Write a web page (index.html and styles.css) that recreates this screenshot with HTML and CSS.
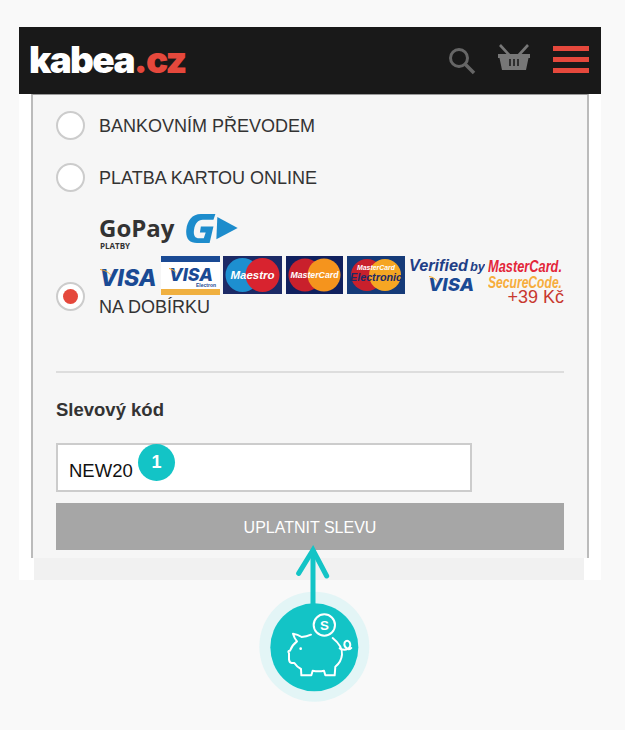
FILE: index.html
```html
<!DOCTYPE html>
<html lang="cs">

<head>
  <meta charset="utf-8">
  <meta name="viewport" content="width=device-width,initial-scale=1">
  <title>kabea.cz</title>
  <link rel="stylesheet" href="styles.css">
</head>

<body>
  <div class="shot">
    <header class="top">
      <div class="logo">kabea<span class="logo-cz">.cz</span></div>
      <div class="top-icons">
        <svg class="ico-search" width="30" height="30" viewBox="0 0 30 30">
          <circle cx="12" cy="12" r="8.5" fill="none" stroke="#666" stroke-width="3"/>
          <path d="M18 18l9 9" stroke="#666" stroke-width="3.5" fill="none"/>
        </svg>
        <svg class="ico-basket" width="32" height="27" viewBox="0 0 32 27">
          <path d="M2 1l11 12M30 1L19 13" stroke="#777" stroke-width="2.6" fill="none"/>
          <path d="M0 10h32v4h-1.500L28 26H4L1.500 14H0z" fill="#777"/>
          <path d="M12 15v7M16 15v7M20 15v7" stroke="#191919" stroke-width="1.500"/>
        </svg>
        <svg class="ico-menu" width="36" height="27" viewBox="0 0 36 27">
          <path d="M0 0h36v5H0zM0 11h36v5H0zM0 22h36v5H0z" fill="#e5483c"/>
        </svg>
      </div>
    </header>

    <main class="panel">
      <div class="pay-row">
        <span class="radio"></span>
        <span class="pay-label">BANKOVNÍM PŘEVODEM</span>
      </div>
      <div class="pay-row">
        <span class="radio"></span>
        <span class="pay-label">PLATBA KARTOU ONLINE</span>
      </div>
      <div class="pay-row pay-row-last">
        <span class="radio radio-on"></span>
        <div class="pay-body">
          <div class="gopay">
            <div class="gopay-name">GoPay<small>PLATBY</small></div>
            <svg class="gopay-mark" width="52" height="31" viewBox="0 0 53 32">
              <path d="M30 1H15C6 1 1 8 0 17c-1 9 3 14 11 14h13l4-17H15l-1 6h6l-2 6h-5c-4 0-6-3-5-9 1-6 4-10 9-10h11z" fill="#1d8ccc"/>
              <path d="M32 4l21 11.500L31 27z" fill="#1d8ccc"/>
            </svg>
          </div>
          <div class="cards">
            <svg width="59" height="39" viewBox="0 0 59 39">
              <text x="29" y="30" text-anchor="middle" class="t-visa" font-size="23" textLength="57" lengthAdjust="spacingAndGlyphs">VISA</text>
              <path d="M1 13q9 1 12 8q-4-6-12-7z" fill="#f0a72e"/>
            </svg>
            <svg width="59" height="39" viewBox="0 0 59 39">
              <rect width="59" height="39" fill="#fff"/>
              <rect width="59" height="6" fill="#1a4a94"/>
              <rect y="33" width="59" height="6" fill="#f0b040"/>
              <text x="30" y="25" text-anchor="middle" class="t-visa" font-size="18" textLength="44" lengthAdjust="spacingAndGlyphs">VISA</text>
              <path d="M8 12q6 1 8 6q-3-4-8-5z" fill="#f0a72e"/>
              <text x="45" y="31" text-anchor="middle" class="t-small" font-size="5" fill="#1a4a94">Electron</text>
            </svg>
            <svg width="60" height="38" viewBox="0 0 60 38">
              <rect x="0" width="59" height="38" fill="#1c2a66"/>
              <circle cx="19.500" cy="19" r="17" fill="#1d8fd0"/>
              <circle cx="39.500" cy="19" r="17" fill="#d8232f"/>
              <text x="29.500" y="23" text-anchor="middle" class="t-card" font-size="11" textLength="44" lengthAdjust="spacingAndGlyphs">Maestro</text>
            </svg>
            <svg width="58" height="38" viewBox="0 0 58 38">
              <rect width="57" height="38" fill="#10205e"/>
              <circle cx="19" cy="19" r="16.500" fill="#c9202c"/>
              <circle cx="38" cy="19" r="16.500" fill="#f5941d"/>
              <text x="28.500" y="22" text-anchor="middle" class="t-card" font-size="9" textLength="48" lengthAdjust="spacingAndGlyphs">MasterCard</text>
            </svg>
            <svg width="58" height="38" viewBox="0 0 58 38">
              <rect width="58" height="38" fill="#153a78"/>
              <circle cx="20" cy="19" r="16" fill="#c9202c"/>
              <circle cx="38" cy="19" r="16" fill="#f5a623"/>
              <text x="29" y="14" text-anchor="middle" class="t-card" font-size="7" textLength="38" lengthAdjust="spacingAndGlyphs">MasterCard</text>
              <text x="29" y="25" text-anchor="middle" class="t-elec" font-size="10" textLength="52" lengthAdjust="spacingAndGlyphs">Electronic</text>
            </svg>
            <svg width="77" height="39" viewBox="0 0 77 39">
              <text x="1" y="15" class="t-verified" font-size="17" textLength="59" lengthAdjust="spacingAndGlyphs">Verified</text>
              <text x="62" y="15" class="t-verified" font-size="12" textLength="15" lengthAdjust="spacingAndGlyphs">by</text>
              <text x="43" y="35" text-anchor="middle" class="t-visa" font-size="18" textLength="46" lengthAdjust="spacingAndGlyphs">VISA</text>
              <path d="M21 20q7 1 9 7q-3-5-9-6z" fill="#f0a72e"/>
            </svg>
            <svg width="76" height="39" viewBox="0 0 76 39">
              <text transform="scale(1 1.300)" x="0" y="12.500" class="t-secure" font-size="12.500" fill="#e3263a" textLength="74" lengthAdjust="spacingAndGlyphs">MasterCard.</text>
              <text transform="scale(1 1.300)" x="0" y="25" class="t-secure" font-size="12.500" fill="#f6ad3c" textLength="74" lengthAdjust="spacingAndGlyphs">SecureCode.</text>
            </svg>
          </div>
          <div class="pay-foot">
            <span class="pay-label">NA DOBÍRKU</span>
            <span class="surcharge">+39 Kč</span>
          </div>
        </div>
      </div>

      <hr class="divider">

      <h2 class="code-title">Slevový kód</h2>
      <div class="code-field">
        <input class="code-input" type="text" value="NEW20">
        <span class="badge">1</span>
      </div>
      <button class="code-btn">UPLATNIT SLEVU</button>
    </main>

    <div class="foot-strip"></div>
  </div>

  <svg class="callout" width="150" height="170" viewBox="0 0 450 510">
    <circle cx="223" cy="320" r="165" fill="#e3f5f6"/>
    <circle cx="223" cy="322" r="132" fill="#13c4c6"/>
    <path d="M219 195V30" stroke="#13c4c6" stroke-width="15" fill="none"/>
    <path d="M176 100L219 30L260 108" stroke="#13c4c6" stroke-width="15" fill="none" stroke-linecap="round"/>
    <g fill="none" stroke="#fff" stroke-width="6" stroke-linecap="round" stroke-linejoin="round">
      <circle cx="253" cy="255" r="32"/>
      <path d="M213 284q-14 6-28 7q-12-8-26-10q4 14 12 23q-14 10-21 28q-8 0-3 8v18q1 10 8 11h8q8 12 20 18l1 19h30l4-14q18 4 34 0l4 14h28l2-26q18-14 20-36q2-26-28-50"/>
      <path d="M299 325q14 8 24 2q12-8 6-20q-8-10-15 0q-4 14 10 20q6 2 10-3"/>
    </g>
    <circle cx="182" cy="326" r="4" fill="#fff"/>
    <text x="253" y="269" text-anchor="middle" class="callout-s">S</text>
  </svg>
</body>

</html>
```

FILE: styles.css
```css
html,
body {
  background-color: #f9f9f9;
  margin: 0;
}

body {
  height: 730px;
  overflow: hidden;
  position: relative;
  font-family: "Liberation Sans", Arial, sans-serif;
  color: #333;
}

.shot {
  width: 582px;
  margin: 27px 0 0 19px;
  background-color: #fff;
}

.top {
  height: 67px;
  background-color: #191919;
  display: flex;
  justify-content: space-between;
  align-items: center;
  padding: 0 12px 0 10px;
  box-sizing: border-box;
}

.logo {
  font-family: Inter, sans-serif;
  font-weight: 900;
  font-size: 37px;
  letter-spacing: -1.700px;
  color: #fff;
  padding-bottom: 2px;
}

.logo-cz {
  color: #e5483c;
}

.top-icons {
  display: flex;
  align-items: center;
}

.ico-search {
  margin-right: 21px;
}

.ico-basket {
  margin-right: 23px;
  margin-bottom: 6px;
}

.ico-menu {
  margin-bottom: 2px;
}

.panel {
  margin: 0 12px;
  padding: 16px 23px 8px;
  box-sizing: border-box;
  height: 464px;
  background-color: #f6f6f6;
  border-left: 2px solid #bbb;
  border-right: 2px solid #bbb;
  border-top: 1px solid #999;
}

.pay-row {
  display: flex;
  align-items: center;
  margin-bottom: 23px;
}

.pay-row-last {
  align-items: flex-end;
  margin-bottom: 0;
  margin-top: -2px;
}

.pay-row-last .radio {
  margin-bottom: 7px;
}

.radio {
  flex: none;
  width: 29px;
  height: 29px;
  box-sizing: border-box;
  border-radius: 100%;
  border: 2px solid #ccc;
  background-color: #fff;
  margin-right: 14px;
  display: flex;
  justify-content: center;
  align-items: center;
}

.radio-on::after {
  content: "";
  width: 15px;
  height: 15px;
  border-radius: 100%;
  background-color: #e5483c;
}

.pay-label {
  font-size: 18px;
  line-height: 22px;
}

.pay-body {
  flex: 1;
}

.gopay {
  display: flex;
  align-items: flex-start;
  height: 36px;
  margin-bottom: 7px;
}

.gopay-name {
  font-family: "Open Sans", sans-serif;
  font-weight: 700;
  font-size: 24px;
  line-height: 30px;
  width: 87px;
}

.gopay-name small {
  display: block;
  font-size: 8px;
  line-height: 6px;
  margin-left: 1px;
}

.cards {
  display: flex;
  gap: 3px;
  height: 39px;
}

.cards svg {
  flex: none;
}

.t-visa {
  font-family: Inter, sans-serif;
  font-weight: 800;
  font-style: italic;
  fill: #1a4a94;
}

.t-small {
  font-family: "Liberation Sans", sans-serif;
  font-weight: 700;
}

.t-card {
  font-family: "Liberation Sans", sans-serif;
  font-weight: 700;
  font-style: italic;
  fill: #fff;
}

.t-elec {
  font-family: "Liberation Sans", sans-serif;
  font-weight: 700;
  font-style: italic;
  fill: #1c2a66;
}

.t-verified {
  font-family: "Liberation Sans", sans-serif;
  font-weight: 700;
  font-style: italic;
  fill: #1f3f86;
}

.t-secure {
  font-family: "Liberation Sans", sans-serif;
  font-weight: 700;
  font-style: italic;
}

.pay-foot {
  display: flex;
  justify-content: space-between;
  align-items: flex-start;
  height: 23px;
}

.pay-foot .pay-label {
  padding-top: 1px;
}

.surcharge {
  font-size: 18px;
  line-height: 20px;
  color: #c8382f;
  margin-top: -8px;
}

.divider {
  border: 0;
  border-top: 2px solid #ddd;
  margin: 53px 0 27px;
}

.code-title {
  font-size: 18.500px;
  line-height: 20px;
  font-weight: 700;
  margin: 0 0 23px;
}

.code-field {
  position: relative;
  width: 416px;
  height: 49px;
  margin-bottom: 11px;
}

.code-input {
  width: 100%;
  height: 100%;
  box-sizing: border-box;
  border: 2px solid #ccc;
  background-color: #fff;
  padding: 6px 11px 0;
  font-family: "Liberation Sans", sans-serif;
  font-size: 18.500px;
  color: #111;
  outline: none;
}

.badge {
  position: absolute;
  left: 82px;
  top: 1px;
  width: 37px;
  height: 37px;
  border-radius: 100%;
  background-color: #13c4c6;
  color: #fff;
  font-weight: 700;
  font-size: 18px;
  display: flex;
  justify-content: center;
  align-items: center;
}

.code-btn {
  display: block;
  width: 100%;
  height: 47px;
  border: 0;
  padding-top: 3px;
  background-color: #a6a6a6;
  color: #fff;
  font-family: "Liberation Sans", sans-serif;
  font-size: 16px;
}

.foot-strip {
  height: 22px;
  margin: 0 17px 0 15px;
  background-color: #f1f1f1;
}

.callout {
  position: absolute;
  left: 240px;
  top: 540px;
}

.callout-s {
  font-family: "Liberation Sans", sans-serif;
  font-weight: 700;
  font-size: 40px;
  fill: #fff;
}
```
